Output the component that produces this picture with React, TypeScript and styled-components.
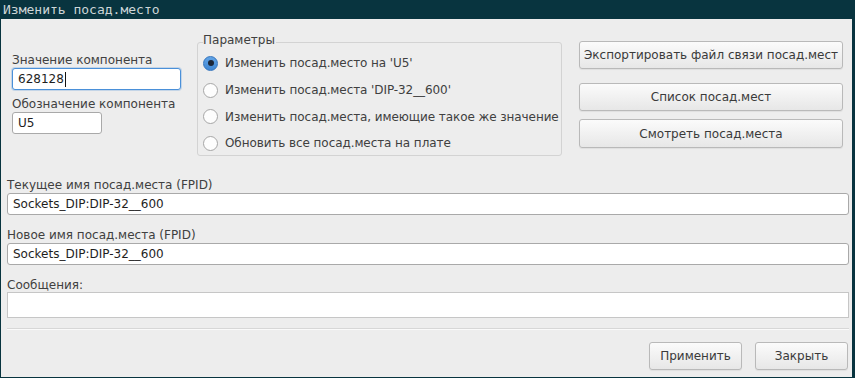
import React from 'react'
import styled, { createGlobalStyle } from 'styled-components'

const GlobalStyle = createGlobalStyle`
  html, body {
    margin: 0;
    padding: 0;
    background: #08343f;
  }
`

const Window = styled.div`
  width: 855px;
  height: 378px;
  display: flex;
  flex-direction: column;
  background: #08343f;
  font-family: 'DejaVu Sans', sans-serif;
  font-size: 12px;
  color: #3c3c3c;
`

const TitleBar = styled.div`
  height: 19px;
  line-height: 19px;
  padding-left: 3px;
  font-family: 'DejaVu Sans Mono', monospace;
  font-size: 13px;
  color: #cdd6d8;
  white-space: nowrap;
`

const Content = styled.div`
  flex: 1;
  margin: 0 3px 1px 1px;
  padding: 0 3px 0 6px;
  background: #ededed;
  display: flex;
  flex-direction: column;
`

const TopRow = styled.div`
  display: flex;
  align-items: flex-start;
  height: 137px;
`

const LeftColumn = styled.div`
  display: flex;
  flex-direction: column;
  width: 169px;
  margin: 34px 0 0 5px;
`

const Label = styled.div<{ $top?: number }>`
  line-height: 15px;
  height: 15px;
  margin-top: ${(p) => p.$top ?? 0}px;
  color: #404040;
  white-space: nowrap;
`

const Field = styled.div<{ $width?: number; $focused?: boolean; $plain?: boolean; $height?: number }>`
  box-sizing: border-box;
  width: ${(p) => (p.$width ? `${p.$width}px` : '100%')};
  height: ${(p) => p.$height ?? 22}px;
  line-height: 20px;
  padding: 0 5px;
  background: #fff;
  color: #1e1e1e;
  border: 1px solid ${(p) => (p.$focused ? '#4a90d9' : p.$plain ? '#c6c6c6' : '#a9a9a9')};
  border-radius: ${(p) => (p.$plain ? 0 : 3)}px;
  box-shadow: ${(p) => (p.$focused ? '0 0 0 1px rgba(74,144,217,0.25)' : 'none')};
  white-space: nowrap;
  display: flex;
  align-items: center;
`

const Caret = styled.span`
  display: inline-block;
  width: 1px;
  height: 15px;
  background: #111;
  margin-left: 1px;
`

const Group = styled.fieldset`
  box-sizing: border-box;
  width: 365px;
  height: 123px;
  margin: 14px 0 0 16px;
  padding: 0 0 0 5px;
  border: 1px solid #d3d3d3;
  border-radius: 3px;
  min-width: 0;
`

const Legend = styled.legend`
  padding: 0 1px 4px 0;
  margin-left: 0;
  line-height: 14px;
  color: #404040;
`

const RadioList = styled.div`
  display: flex;
  flex-direction: column;
  margin-top: -1px;
`

const RadioRow = styled.div`
  display: flex;
  align-items: center;
  gap: 7px;
  height: 26.7px;
  color: #404040;
  white-space: nowrap;
  letter-spacing: -0.08px;
`

const RadioDot = styled.span<{ $checked?: boolean }>`
  box-sizing: border-box;
  width: 15px;
  height: 15px;
  border-radius: 50%;
  flex: none;
  display: flex;
  align-items: center;
  justify-content: center;
  border: 1px solid ${(p) => (p.$checked ? '#3474bd' : '#a6a6a6')};
  background: ${(p) => (p.$checked ? 'linear-gradient(#62a4e6, #3f86d2)' : '#fdfdfd')};

  &::after {
    content: '';
    display: ${(p) => (p.$checked ? 'block' : 'none')};
    width: 6px;
    height: 6px;
    border-radius: 50%;
    background: #1b2638;
  }
`

const ButtonColumn = styled.div`
  display: flex;
  flex-direction: column;
  width: 264px;
  margin: 22px 0 0 17px;
`

const Button = styled.button<{ $top?: number; $width?: number; $height?: number }>`
  box-sizing: border-box;
  width: ${(p) => (p.$width ? `${p.$width}px` : '100%')};
  height: ${(p) => p.$height ?? 28}px;
  margin-top: ${(p) => p.$top ?? 0}px;
  padding: 0;
  font-family: 'DejaVu Sans', sans-serif;
  font-size: 12px;
  color: #3a3a3a;
  border: 1px solid #b9b9b9;
  border-radius: 3px;
  background: linear-gradient(#fbfbfb, #e7e7e7);
  box-shadow: 0 1px 1px rgba(0, 0, 0, 0.06);
  white-space: nowrap;
`

const Lower = styled.div`
  display: flex;
  flex-direction: column;
  margin-top: 22px;
`

const Separator = styled.div`
  margin-top: 10px;
  border-top: 1px solid #d7d7d7;
  border-bottom: 1px solid #fafafa;
`

const Footer = styled.div`
  display: flex;
  justify-content: flex-end;
  gap: 13px;
  margin: 12px 1px 0 0;
`

const options = [
  { text: "Изменить посад.место на 'U5'", checked: true },
  { text: "Изменить посад.места 'DIP-32__600'" },
  { text: 'Изменить посад.места, имеющие такое же значение' },
  { text: 'Обновить все посад.места на плате' },
]

export default function App() {
  return (
    <>
      <GlobalStyle />
      <Window>
        <TitleBar>Изменить посад.место</TitleBar>
        <Content>
          <TopRow>
            <LeftColumn>
              <Label>Значение компонента</Label>
              <Field $focused>
                628128
                <Caret />
              </Field>
              <Label $top={7}>Обозначение компонента</Label>
              <Field $width={90}>U5</Field>
            </LeftColumn>
            <Group>
              <Legend>Параметры</Legend>
              <RadioList>
                {options.map((o) => (
                  <RadioRow key={o.text}>
                    <RadioDot $checked={o.checked} />
                    {o.text}
                  </RadioRow>
                ))}
              </RadioList>
            </Group>
            <ButtonColumn>
              <Button>Экспортировать файл связи посад.мест</Button>
              <Button $top={14}>Список посад.мест</Button>
              <Button $top={8} $height={29}>
                Смотреть посад.места
              </Button>
            </ButtonColumn>
          </TopRow>
          <Lower>
            <Label>Текущее имя посад.места (FPID)</Label>
            <Field>Sockets_DIP:DIP-32__600</Field>
            <Label $top={13}>Новое имя посад.места (FPID)</Label>
            <Field>Sockets_DIP:DIP-32__600</Field>
            <Label $top={13}>Сообщения:</Label>
            <Field $plain $height={26} style={{ marginTop: -1 }} />
            <Separator />
            <Footer>
              <Button $width={93}>Применить</Button>
              <Button $width={93}>Закрыть</Button>
            </Footer>
          </Lower>
        </Content>
      </Window>
    </>
  )
}
